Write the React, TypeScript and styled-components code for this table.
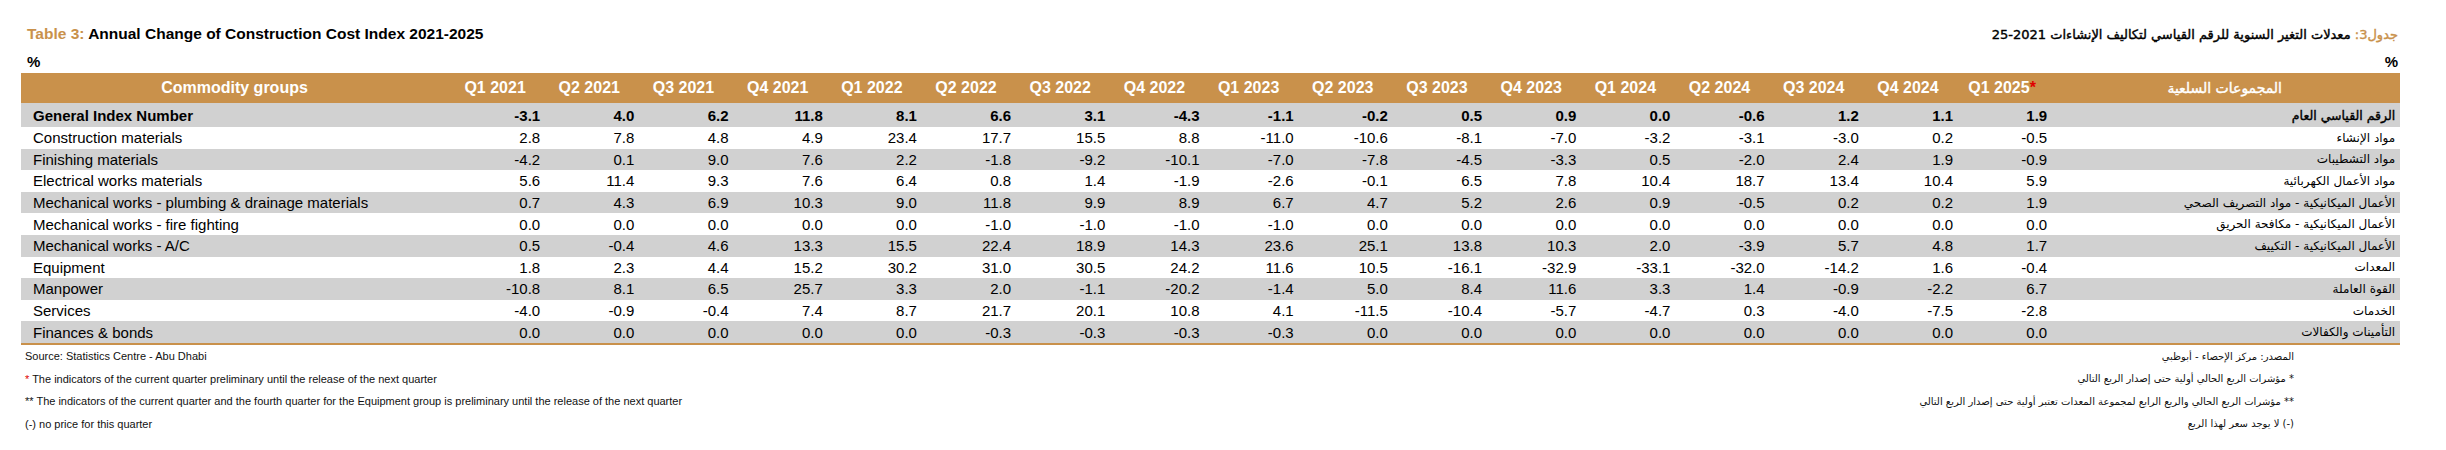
import React from 'react';
import styled, { createGlobalStyle } from 'styled-components';

type Row = {
    en: string;
    ar: string;
    values: string[];
    bold?: boolean;
};

const quarters = [
    'Q1 2021', 'Q2 2021', 'Q3 2021', 'Q4 2021',
    'Q1 2022', 'Q2 2022', 'Q3 2022', 'Q4 2022',
    'Q1 2023', 'Q2 2023', 'Q3 2023', 'Q4 2023',
    'Q1 2024', 'Q2 2024', 'Q3 2024', 'Q4 2024',
    'Q1 2025',
];

const rows: Row[] = [
    {
        en: 'General Index Number',
        ar: 'الرقم القياسي العام',
        bold: true,
        values: ['-3.1', '4.0', '6.2', '11.8', '8.1', '6.6', '3.1', '-4.3', '-1.1', '-0.2', '0.5', '0.9', '0.0', '-0.6', '1.2', '1.1', '1.9'],
    },
    {
        en: 'Construction materials',
        ar: 'مواد الإنشاء',
        values: ['2.8', '7.8', '4.8', '4.9', '23.4', '17.7', '15.5', '8.8', '-11.0', '-10.6', '-8.1', '-7.0', '-3.2', '-3.1', '-3.0', '0.2', '-0.5'],
    },
    {
        en: 'Finishing materials',
        ar: 'مواد التشطيبات',
        values: ['-4.2', '0.1', '9.0', '7.6', '2.2', '-1.8', '-9.2', '-10.1', '-7.0', '-7.8', '-4.5', '-3.3', '0.5', '-2.0', '2.4', '1.9', '-0.9'],
    },
    {
        en: 'Electrical works materials',
        ar: 'مواد الأعمال الكهربائية',
        values: ['5.6', '11.4', '9.3', '7.6', '6.4', '0.8', '1.4', '-1.9', '-2.6', '-0.1', '6.5', '7.8', '10.4', '18.7', '13.4', '10.4', '5.9'],
    },
    {
        en: 'Mechanical works - plumbing & drainage materials',
        ar: 'الأعمال الميكانيكية - مواد التصريف الصحي',
        values: ['0.7', '4.3', '6.9', '10.3', '9.0', '11.8', '9.9', '8.9', '6.7', '4.7', '5.2', '2.6', '0.9', '-0.5', '0.2', '0.2', '1.9'],
    },
    {
        en: 'Mechanical works - fire fighting',
        ar: 'الأعمال الميكانيكية - مكافحة الحريق',
        values: ['0.0', '0.0', '0.0', '0.0', '0.0', '-1.0', '-1.0', '-1.0', '-1.0', '0.0', '0.0', '0.0', '0.0', '0.0', '0.0', '0.0', '0.0'],
    },
    {
        en: 'Mechanical works - A/C',
        ar: 'الأعمال الميكانيكية - التكييف',
        values: ['0.5', '-0.4', '4.6', '13.3', '15.5', '22.4', '18.9', '14.3', '23.6', '25.1', '13.8', '10.3', '2.0', '-3.9', '5.7', '4.8', '1.7'],
    },
    {
        en: 'Equipment',
        ar: 'المعدات',
        values: ['1.8', '2.3', '4.4', '15.2', '30.2', '31.0', '30.5', '24.2', '11.6', '10.5', '-16.1', '-32.9', '-33.1', '-32.0', '-14.2', '1.6', '-0.4'],
    },
    {
        en: 'Manpower',
        ar: 'القوة العاملة',
        values: ['-10.8', '8.1', '6.5', '25.7', '3.3', '2.0', '-1.1', '-20.2', '-1.4', '5.0', '8.4', '11.6', '3.3', '1.4', '-0.9', '-2.2', '6.7'],
    },
    {
        en: 'Services',
        ar: 'الخدمات',
        values: ['-4.0', '-0.9', '-0.4', '7.4', '8.7', '21.7', '20.1', '10.8', '4.1', '-11.5', '-10.4', '-5.7', '-4.7', '0.3', '-4.0', '-7.5', '-2.8'],
    },
    {
        en: 'Finances & bonds',
        ar: 'التأمينات والكفالات',
        values: ['0.0', '0.0', '0.0', '0.0', '0.0', '-0.3', '-0.3', '-0.3', '-0.3', '0.0', '0.0', '0.0', '0.0', '0.0', '0.0', '0.0', '0.0'],
    },
];

const notes = [
    { en: 'Source: Statistics Centre - Abu Dhabi', ar: 'المصدر: مركز الإحصاء - أبوظبي', star: false },
    { en: ' The indicators of the current quarter preliminary until the release of the next quarter', ar: '* مؤشرات الربع الحالي أولية حتى إصدار الربع التالي', star: true },
    { en: '** The indicators of the current quarter and the fourth quarter for the Equipment group is preliminary until the release of the next quarter', ar: '** مؤشرات الربع الحالي والربع الرابع لمجموعة المعدات  تعتبر أولية حتى إصدار الربع التالي', star: false },
    { en: '(-) no price for this quarter', ar: '(-) لا يوجد سعر لهذا الربع', star: false },
];

function App() {
    return (
        <>
            <GlobalStyle />
            <Page>
                <TitleRow>
                    <EnTitle>
                        <Accent>Table 3:</Accent> Annual Change of Construction Cost Index 2021-2025
                    </EnTitle>
                    <ArTitle dir="rtl">
                        <Accent>جدول3:</Accent> معدلات التغير السنوية للرقم القياسي لتكاليف الإنشاءات 2021-25
                    </ArTitle>
                </TitleRow>
                <UnitRow>
                    <span>%</span>
                    <span>%</span>
                </UnitRow>

                <Table>
                    <HeadRow>
                        <HeadCell>Commodity groups</HeadCell>
                        {quarters.map((q, i) => (
                            <HeadCell key={q}>
                                {q}
                                {i === quarters.length - 1 && <Star>*</Star>}
                            </HeadCell>
                        ))}
                        <ArHeadCell dir="rtl">المجموعات السلعية</ArHeadCell>
                    </HeadRow>

                    {rows.map((row, i) => (
                        <BodyRow key={row.en} $shade={i % 2 === 0} $bold={!!row.bold}>
                            <EnLabel>{row.en}</EnLabel>
                            {row.values.map((v, j) => (
                                <NumCell key={j}>{v}</NumCell>
                            ))}
                            <ArLabel dir="rtl" $bold={!!row.bold}>
                                {row.ar}
                            </ArLabel>
                        </BodyRow>
                    ))}
                </Table>

                <Notes>
                    {notes.map((n) => (
                        <NoteRow key={n.ar}>
                            <EnNote>
                                {n.star && <Star>*</Star>}
                                {n.en}
                            </EnNote>
                            <ArNote dir="rtl">{n.ar}</ArNote>
                        </NoteRow>
                    ))}
                </Notes>
            </Page>
        </>
    );
}

const ORANGE = '#c9914b';
const GRAY = '#d1d1d1';
const COLUMNS = '427px repeat(17, 94.2px) 351px';
const ARABIC = `'DejaVu Sans', 'Liberation Sans', sans-serif`;

const GlobalStyle = createGlobalStyle`
    body {
        margin: 0;
        background: #ffffff;
        color: #000000;
        font-family: 'Liberation Sans', Arial, sans-serif;
    }
`;

const Page = styled.div`
    width: 2379px;
    padding: 24px 0 0 21px;
`;

const TitleRow = styled.div`
    display: flex;
    justify-content: space-between;
    align-items: center;
    height: 20px;
    padding: 0 2px 0 6px;
`;

const EnTitle = styled.div`
    font-size: 15.5px;
    font-weight: 700;
`;

/* DejaVu's bold Arabic runs much wider than the original's, so the
   Arabic "bold" text is the regular face thickened with a stroke. */
const ArTitle = styled.div`
    font-family: ${ARABIC};
    font-size: 13px;
    font-weight: 400;
    -webkit-text-stroke: 0.4px currentColor;
`;

const Accent = styled.span`
    color: ${ORANGE};
`;

const UnitRow = styled.div`
    display: flex;
    justify-content: space-between;
    align-items: flex-end;
    height: 29px;
    padding: 0 2px 3px 6px;
    box-sizing: border-box;
    font-size: 15px;
    font-weight: 700;
`;

const Table = styled.div`
    border-bottom: 2px solid ${ORANGE};
`;

const HeadRow = styled.div`
    display: grid;
    grid-template-columns: ${COLUMNS};
    align-items: center;
    height: 30px;
    background: ${ORANGE};
    color: #ffffff;
    font-size: 16px;
    font-weight: 700;
`;

const HeadCell = styled.div`
    text-align: center;
    white-space: nowrap;
`;

const ArHeadCell = styled(HeadCell)`
    font-family: ${ARABIC};
    font-size: 14px;
    font-weight: 400;
    -webkit-text-stroke: 0.4px currentColor;
`;

const Star = styled.span`
    color: #e00000;
`;

const BodyRow = styled.div<{ $shade: boolean; $bold: boolean }>`
    display: grid;
    grid-template-columns: ${COLUMNS};
    align-items: center;
    height: ${({ $bold }) => ($bold ? '24px' : '21.6px')};
    background: ${({ $shade }) => ($shade ? GRAY : '#ffffff')};
    font-size: 15px;
    font-weight: ${({ $bold }) => ($bold ? 700 : 400)};
    white-space: nowrap;
`;

const EnLabel = styled.div`
    padding-left: 12px;
`;

const NumCell = styled.div`
    text-align: right;
    padding-right: 2px;
`;

const ArLabel = styled.div<{ $bold: boolean }>`
    font-family: ${ARABIC};
    font-size: ${({ $bold }) => ($bold ? '12.5px' : '12px')};
    font-weight: 400;
    -webkit-text-stroke: ${({ $bold }) => ($bold ? '0.4px currentColor' : '0')};
    text-align: right;
    padding-right: 5px;
`;

const Notes = styled.div`
    display: flex;
    flex-direction: column;
`;

const NoteRow = styled.div`
    display: flex;
    justify-content: space-between;
    align-items: center;
    height: 22.5px;
    font-size: 11px;
    color: #111111;
`;

const EnNote = styled.div`
    padding-left: 4px;
`;

const ArNote = styled.div`
    font-family: ${ARABIC};
    font-size: 10px;
    padding-right: 106px;
`;

export default App;
